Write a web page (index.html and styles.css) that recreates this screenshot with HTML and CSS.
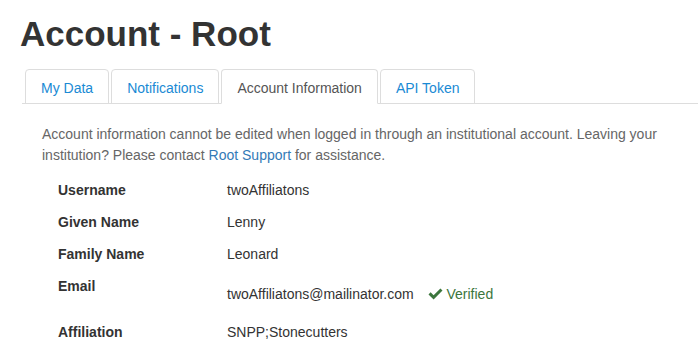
FILE: index.html
```html
<!DOCTYPE html>
<html lang="en">
<head>
    <meta charset="UTF-8">
    <meta name="viewport" content="width=device-width, initial-scale=1.0">
    <title>Account - Root</title>
    <link rel="stylesheet" href="styles.css">
</head>
<body>
    <div class="page">
        <h1>Account - Root</h1>

        <!-- Tabs -->
        <ul class="tabs">
            <li><a href="#" class="tab">My Data</a></li>
            <li><a href="#" class="tab">Notifications</a></li>
            <li><a href="#" class="tab active">Account Information</a></li>
            <li><a href="#" class="tab">API Token</a></li>
        </ul>

        <div class="tab-content">
            <p class="notice">
                Account information cannot be edited when logged in through an institutional account. Leaving your
                institution? Please contact <a href="#" class="link">Root Support</a> for assistance.
            </p>

            <div class="info">
                <div class="row">
                    <div class="label">Username</div>
                    <div class="value">twoAffiliatons</div>
                </div>
                <div class="row">
                    <div class="label">Given Name</div>
                    <div class="value">Lenny</div>
                </div>
                <div class="row">
                    <div class="label">Family Name</div>
                    <div class="value">Leonard</div>
                </div>
                <div class="row">
                    <div class="label">Email</div>
                    <div class="value email">
                        twoAffiliatons@mailinator.com
                        <span class="verified">
                            <svg width="15" height="12" viewBox="0 0 15 12">
                                <path d="M0.5 6.4 L2.6 4.3 L5.6 7.2 L12.4 0.4 L14.5 2.5 L5.6 11.4 Z" fill="#3c763d" />
                            </svg>
                            Verified
                        </span>
                    </div>
                </div>
                <div class="row">
                    <div class="label">Affiliation</div>
                    <div class="value">SNPP;Stonecutters</div>
                </div>
            </div>
        </div>
    </div>
</body>
</html>
```

FILE: styles.css
```css
body {
    margin: 0;
    font-family: "Liberation Sans", Arial, sans-serif;
    font-size: 14px;
    color: #333;
    background-color: #fff;
}
.page {
    padding: 15px 0 0 20px;
}
h1 {
    margin: 0;
    font-size: 35px;
    font-weight: bold;
    line-height: 1.1;
    color: #333;
}
.tabs {
    display: flex;
    list-style: none;
    margin: 15px 0 0 2px;
    padding: 0 0 0 3px;
    border-bottom: 1px solid #ddd;
}
.tabs li {
    margin-right: 2px;
    margin-bottom: -1px;
}
.tab {
    display: block;
    padding: 8px 15px 5px;
    line-height: 20px;
    color: #1a8ad4;
    text-decoration: none;
    border: 1px solid #ddd;
    border-radius: 4px 4px 0 0;
}
.tab.active {
    color: #555;
    border-bottom-color: #fff;
}
.tab-content {
    padding: 20px 0 0 22px;
}
.notice {
    margin: 0;
    line-height: 21px;
    color: #666;
}
.link {
    color: #337ab7;
    text-decoration: none;
}
.info {
    margin-top: 14px;
    padding-left: 16px;
}
.row {
    display: flex;
    line-height: 20px;
    margin-bottom: 12px;
}
.label {
    width: 169px;
    font-weight: bold;
}
.value.email {
    padding: 8px 0 6px;
}
.verified {
    margin-left: 10px;
    color: #3c763d;
}
.verified svg {
    vertical-align: -1px;
}
```
